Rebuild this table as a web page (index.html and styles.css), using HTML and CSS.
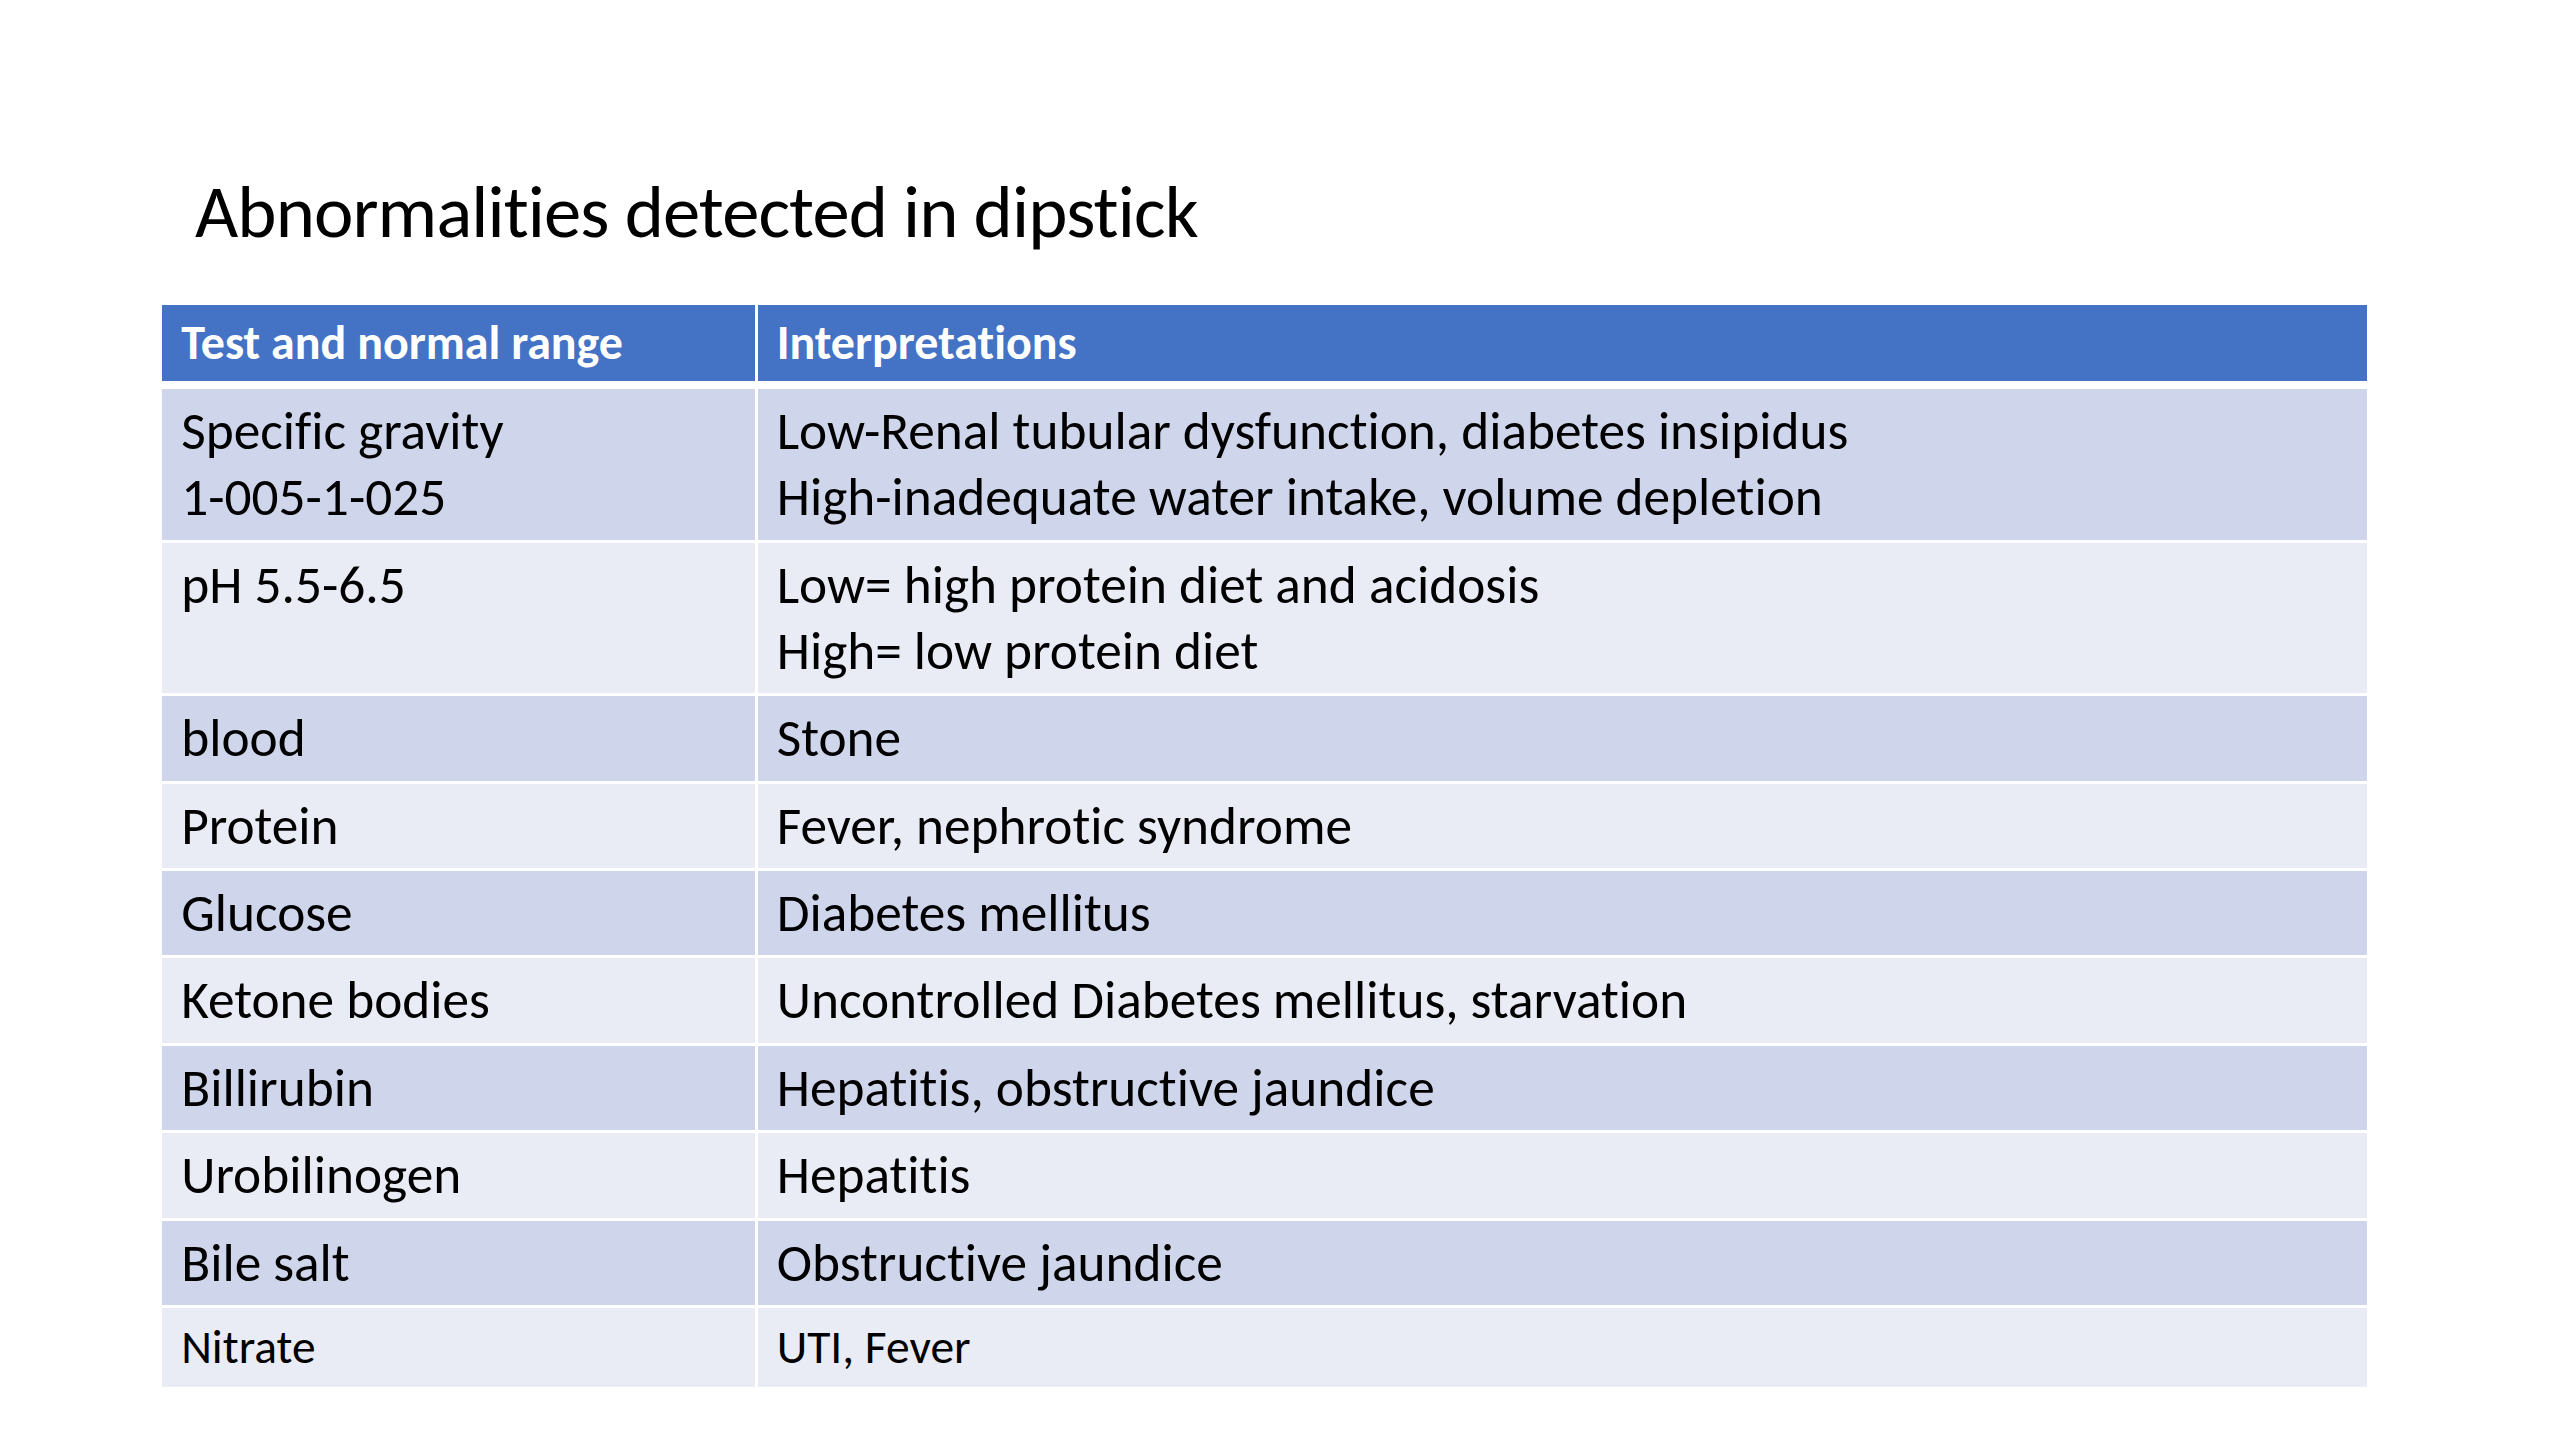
FILE: index.html
```html
<!DOCTYPE html>
<html lang="en">
<head>
<meta charset="utf-8">
<title>Abnormalities detected in dipstick</title>
<link rel="stylesheet" href="styles.css">
</head>
<body>
<main class="slide">
  <h1 class="title">Abnormalities detected in dipstick</h1>
  <table class="grid">
    <colgroup><col class="col-test"><col class="col-interp"></colgroup>
    <thead>
      <tr><th>Test and normal range</th><th>Interpretations</th></tr>
    </thead>
    <tbody>
      <tr class="dark"><td>Specific gravity<br>1-005-1-025</td><td>Low-Renal tubular dysfunction, diabetes insipidus<br>High-inadequate water intake, volume depletion</td></tr>
      <tr class="light"><td>pH 5.5-6.5</td><td>Low= high protein diet and acidosis<br>High= low protein diet</td></tr>
      <tr class="dark"><td>blood</td><td>Stone</td></tr>
      <tr class="light"><td>Protein</td><td>Fever, nephrotic syndrome</td></tr>
      <tr class="dark"><td>Glucose</td><td>Diabetes mellitus</td></tr>
      <tr class="light"><td>Ketone bodies</td><td>Uncontrolled Diabetes mellitus, starvation</td></tr>
      <tr class="dark"><td>Billirubin</td><td>Hepatitis, obstructive jaundice</td></tr>
      <tr class="light"><td>Urobilinogen</td><td>Hepatitis</td></tr>
      <tr class="dark"><td>Bile salt</td><td>Obstructive jaundice</td></tr>
      <tr class="light small"><td>Nitrate</td><td>UTI, Fever</td></tr>
    </tbody>
  </table>
</main>
</body>
</html>
```
FILE: styles.css
```css
html, body {
  margin: 0;
  padding: 0;
  background: #ffffff;
}

body {
  font-family: "Carlito", "Liberation Sans", sans-serif;
  color: #000000;
  font-variant-ligatures: none;
  font-feature-settings: "liga" 0, "clig" 0;
}

.slide {
  width: 2560px;
  height: 1440px;
  box-sizing: border-box;
  padding: 166px 0 0 162px;
  overflow: hidden;
}

.title {
  margin: 0 0 0 33px;
  font-size: 74.7px;
  line-height: 91px;
  height: 91px;
  font-weight: 400;
  letter-spacing: -0.9px;
  color: #000000;
}

.grid {
  margin-top: 48px;
  width: 2205px;
  table-layout: fixed;
  border-collapse: collapse;
  border-style: hidden;
}

.col-test { width: 594px; }
.col-interp { width: 1611px; }

.grid th,
.grid td {
  text-align: left;
  vertical-align: top;
  padding: 9px 19.2px 9.4px;
  border: 3px solid #ffffff;
}

.grid th {
  background: #4472c4;
  color: #ffffff;
  font-weight: 700;
  font-size: 48px;
  line-height: 58px;
  border-bottom-width: 8px;
}

.grid td {
  font-size: 53.3px;
  line-height: 66px;
  color: #000000;
}

.dark td { background: #cfd5ea; }
.light td { background: #e9ebf5; }

.small td {
  font-size: 47.5px;
  line-height: 61px;
}
```
